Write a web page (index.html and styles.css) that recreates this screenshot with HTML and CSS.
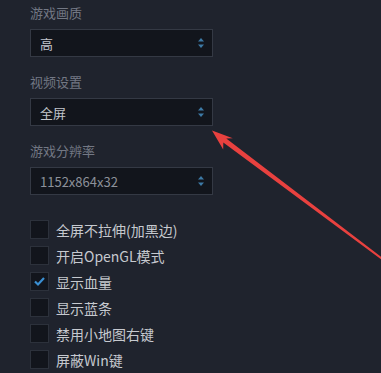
FILE: index.html
```html
<!DOCTYPE html>
<html lang="zh">
<head>
<meta charset="utf-8">
<link rel="stylesheet" href="styles.css">
</head>
<body>
<div class="panel">
  <div class="field">
    <div class="label">游戏画质</div>
    <div class="select"><span>高</span><svg class="spin" width="6" height="10" viewBox="0 0 6 10"><path d="M3 0L6 3.5H0Z M3 10L6 6.5H0Z" fill="#3d7aa6"/></svg></div>
  </div>
  <div class="field">
    <div class="label">视频设置</div>
    <div class="select"><span>全屏</span><svg class="spin" width="6" height="10" viewBox="0 0 6 10"><path d="M3 0L6 3.5H0Z M3 10L6 6.5H0Z" fill="#3d7aa6"/></svg></div>
  </div>
  <div class="field">
    <div class="label">游戏分辨率</div>
    <div class="select"><span class="dim">1152x864x32</span><svg class="spin" width="6" height="10" viewBox="0 0 6 10"><path d="M3 0L6 3.5H0Z M3 10L6 6.5H0Z" fill="#3d7aa6"/></svg></div>
  </div>
  <ul class="checks">
    <li><span class="box"></span>全屏不拉伸(加黑边)</li>
    <li><span class="box"></span>开启OpenGL模式</li>
    <li><span class="box"><svg width="13" height="11" viewBox="0 0 13 11"><path d="M2 5.5L5 8.5L11 2" fill="none" stroke="#3a8fd2" stroke-width="2.2"/></svg></span>显示血量</li>
    <li><span class="box"></span>显示蓝条</li>
    <li><span class="box"></span>禁用小地图右键</li>
    <li><span class="box"></span>屏蔽Win键</li>
  </ul>
</div>
<svg class="arrow" width="381" height="373" viewBox="0 0 381 373">
  <polygon points="212,130.5 232.8,138.2 226.3,138.6 385.6,260.2 384.4,261.8 223.3,142.6 223.2,149.4" fill="#e8413f"/>
</svg>
</body>
</html>
```
FILE: styles.css
```css
html, body {
  margin: 0;
  padding: 0;
  background: #1f232d;
  width: 381px;
  height: 373px;
  overflow: hidden;
  font-family: "Noto Sans CJK SC", "Noto Sans", sans-serif;
}
.panel {
  padding: 4px 0 0 30px;
  display: flex;
  flex-direction: column;
  gap: 16px;
}
.field {
  display: flex;
  flex-direction: column;
  gap: 7px;
}
.label {
  font-size: 13px;
  line-height: 18px;
  height: 18px;
  color: #737884;
}
.select {
  box-sizing: border-box;
  width: 183px;
  height: 28px;
  background: #12151c;
  border: 1px solid #343944;
  display: flex;
  align-items: center;
  justify-content: space-between;
  padding: 0 8px 0 9px;
  font-size: 13px;
  color: #c3c6cc;
}
.select .dim {
  color: #8d919a;
}
.spin {
  display: block;
}
.checks {
  list-style: none;
  margin: 9px 0 0 0;
  padding: 0;
  display: flex;
  flex-direction: column;
  gap: 7px;
}
.checks li {
  display: flex;
  align-items: center;
  height: 19px;
  font-size: 14px;
  color: #c6c9cf;
}
.box {
  box-sizing: border-box;
  width: 19px;
  height: 19px;
  background: #12151c;
  border: 1px solid #2c313b;
  margin-right: 7px;
  display: flex;
  align-items: center;
  justify-content: center;
}
.arrow {
  position: absolute;
  left: 0;
  top: 0;
  pointer-events: none;
}
```
